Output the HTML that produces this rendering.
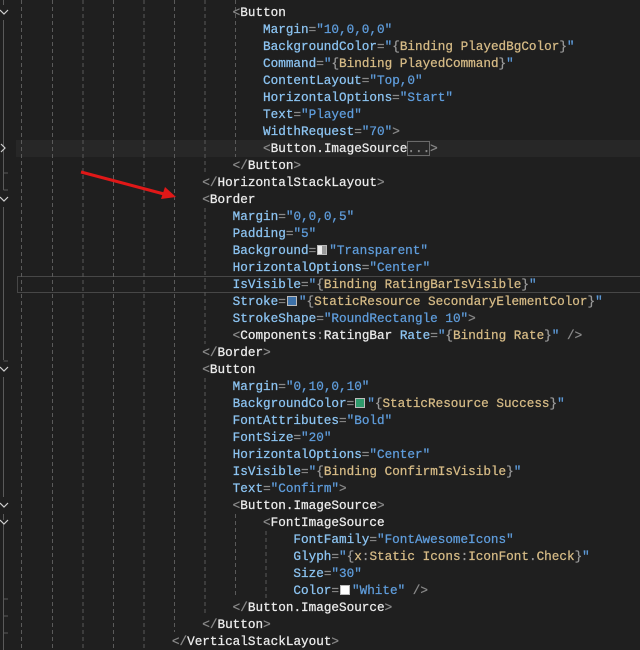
<!DOCTYPE html>
<html><head><meta charset="utf-8"><style>
html,body{margin:0;padding:0;background:#1f1f1f;width:640px;height:650px;overflow:hidden}
#ed{position:absolute;left:20px;top:4px;font-family:"Liberation Mono",monospace;font-size:12.67px;line-height:17px;color:#e6e6e6;-webkit-text-stroke:0.25px currentColor}
.l{height:17px;white-space:pre}
.p{color:#8a8a8a}.t{color:#ececec}.a{color:#8cc4f2}.s{color:#5f9ddc}.b{color:#d6bb86}.g{color:#9a9a9a}
.sw{display:inline-block;width:10px;height:10px;vertical-align:-1px;margin:0 2px 0 1px;box-sizing:border-box;border:1px solid #bbb;-webkit-text-stroke:0}
.hl{position:absolute;left:16px;width:624px;height:17px}
</style></head><body>
<div class="hl" style="top:140px;background:#272727"></div>
<div class="hl" style="top:276px;height:15px;border:1px solid #474747;border-right:none;left:17px"></div>
<svg width="640" height="650" style="position:absolute;left:0;top:0" xmlns="http://www.w3.org/2000/svg">
<g stroke="#5a5a5a" stroke-width="1" stroke-dasharray="4,3">
<line x1="21.5" y1="0" x2="21.5" y2="650"/><line x1="52.5" y1="0" x2="52.5" y2="650"/>
<line x1="83" y1="0" x2="83" y2="650"/><line x1="113.5" y1="0" x2="113.5" y2="650"/>
<line x1="144" y1="0" x2="144" y2="650"/><line x1="174.5" y1="0" x2="174.5" y2="632"/>
<line x1="205" y1="0" x2="205" y2="174"/><line x1="205" y1="208" x2="205" y2="344"/><line x1="205" y1="378" x2="205" y2="616"/>
<line x1="235.5" y1="0" x2="235.5" y2="157"/><line x1="235.5" y1="514" x2="235.5" y2="598"/>
<line x1="266" y1="531" x2="266" y2="598"/>
</g>
<g stroke="#5a5a5a" stroke-width="1" fill="none">
<line x1="3.5" y1="0" x2="3.5" y2="5"/><line x1="3.5" y1="20" x2="3.5" y2="190"/><line x1="3.5" y1="173" x2="8" y2="173"/><line x1="3.5" y1="190" x2="8" y2="190"/>
<line x1="3.5" y1="207" x2="3.5" y2="360"/><line x1="3.5" y1="361" x2="8" y2="361"/>
<line x1="3.5" y1="377" x2="3.5" y2="497"/><line x1="3.5" y1="514" x2="3.5" y2="650"/>
<line x1="3.5" y1="599" x2="8" y2="599"/><line x1="3.5" y1="616" x2="8" y2="616"/><line x1="3.5" y1="633" x2="8" y2="633"/>
</g>
<g stroke="#d0d0d0" stroke-width="1.2" fill="#1f1f1f">
<path d="M0 10 L4 14 L8 10" /><path d="M0 197 L4 201 L8 197"/><path d="M0 367 L4 371 L8 367"/>
<path d="M0 503 L4 507 L8 503"/><path d="M0 520 L4 524 L8 520"/><path d="M1 144 L5 148 L1 152"/>
</g>
<line x1="81" y1="172" x2="164" y2="194" stroke="#e01818" stroke-width="3"/>
<path d="M176 197 L161 199 L165 187 Z" fill="#e01818"/>
</svg>
<div id="ed"><div class="l">                            <span class="p">&lt;</span><span class="t">Button</span></div><div class="l">                                <span class="a">Margin</span><span class="p">=</span><span class="s">"10,0,0,0"</span></div><div class="l">                                <span class="a">BackgroundColor</span><span class="p">=</span><span class="s">"</span><span class="g">{</span><span class="b">Binding PlayedBgColor</span><span class="g">}</span><span class="s">"</span></div><div class="l">                                <span class="a">Command</span><span class="p">=</span><span class="s">"</span><span class="g">{</span><span class="b">Binding PlayedCommand</span><span class="g">}</span><span class="s">"</span></div><div class="l">                                <span class="a">ContentLayout</span><span class="p">=</span><span class="s">"Top,0"</span></div><div class="l">                                <span class="a">HorizontalOptions</span><span class="p">=</span><span class="s">"Start"</span></div><div class="l">                                <span class="a">Text</span><span class="p">=</span><span class="s">"Played"</span></div><div class="l">                                <span class="a">WidthRequest</span><span class="p">=</span><span class="s">"70"</span><span class="p">&gt;</span></div><div class="l">                                <span class="p">&lt;</span><span class="t">Button.ImageSource</span><span class="p" style="outline:1px solid #6a6a6a;outline-offset:-1px">...</span><span class="p">&gt;</span></div><div class="l">                            <span class="p">&lt;/</span><span class="t">Button</span><span class="p">&gt;</span></div><div class="l">                        <span class="p">&lt;/</span><span class="t">HorizontalStackLayout</span><span class="p">&gt;</span></div><div class="l">                        <span class="p">&lt;</span><span class="t">Border</span></div><div class="l">                            <span class="a">Margin</span><span class="p">=</span><span class="s">"0,0,0,5"</span></div><div class="l">                            <span class="a">Padding</span><span class="p">=</span><span class="s">"5"</span></div><div class="l">                            <span class="a">Background</span><span class="p">=</span><span class="sw" style="background:linear-gradient(90deg,#eee 50%,#999 50%)"></span><span class="s">"Transparent"</span></div><div class="l">                            <span class="a">HorizontalOptions</span><span class="p">=</span><span class="s">"Center"</span></div><div class="l">                            <span class="a">IsVisible</span><span class="p">=</span><span class="s">"</span><span class="g">{</span><span class="b">Binding RatingBarIsVisible</span><span class="g">}</span><span class="s">"</span></div><div class="l">                            <span class="a">Stroke</span><span class="p">=</span><span class="sw" style="background:#3d71a8"></span><span class="s">"</span><span class="g">{</span><span class="b">StaticResource SecondaryElementColor</span><span class="g">}</span><span class="s">"</span></div><div class="l">                            <span class="a">StrokeShape</span><span class="p">=</span><span class="s">"RoundRectangle 10"</span><span class="p">&gt;</span></div><div class="l">                            <span class="p">&lt;</span><span class="t">Components</span><span class="p">:</span><span class="t">RatingBar</span> <span class="a">Rate</span><span class="p">=</span><span class="s">"</span><span class="g">{</span><span class="b">Binding Rate</span><span class="g">}</span><span class="s">"</span> <span class="p">/&gt;</span></div><div class="l">                        <span class="p">&lt;/</span><span class="t">Border</span><span class="p">&gt;</span></div><div class="l">                        <span class="p">&lt;</span><span class="t">Button</span></div><div class="l">                            <span class="a">Margin</span><span class="p">=</span><span class="s">"0,10,0,10"</span></div><div class="l">                            <span class="a">BackgroundColor</span><span class="p">=</span><span class="sw" style="background:#2f9a6c"></span><span class="s">"</span><span class="g">{</span><span class="b">StaticResource Success</span><span class="g">}</span><span class="s">"</span></div><div class="l">                            <span class="a">FontAttributes</span><span class="p">=</span><span class="s">"Bold"</span></div><div class="l">                            <span class="a">FontSize</span><span class="p">=</span><span class="s">"20"</span></div><div class="l">                            <span class="a">HorizontalOptions</span><span class="p">=</span><span class="s">"Center"</span></div><div class="l">                            <span class="a">IsVisible</span><span class="p">=</span><span class="s">"</span><span class="g">{</span><span class="b">Binding ConfirmIsVisible</span><span class="g">}</span><span class="s">"</span></div><div class="l">                            <span class="a">Text</span><span class="p">=</span><span class="s">"Confirm"</span><span class="p">&gt;</span></div><div class="l">                            <span class="p">&lt;</span><span class="t">Button.ImageSource</span><span class="p">&gt;</span></div><div class="l">                                <span class="p">&lt;</span><span class="t">FontImageSource</span></div><div class="l">                                    <span class="a">FontFamily</span><span class="p">=</span><span class="s">"FontAwesomeIcons"</span></div><div class="l">                                    <span class="a">Glyph</span><span class="p">=</span><span class="s">"</span><span class="g">{</span><span class="b">x</span><span class="g">:</span><span class="b">Static Icons</span><span class="g">:</span><span class="b">IconFont</span><span class="g">.</span><span class="b">Check</span><span class="g">}</span><span class="s">"</span></div><div class="l">                                    <span class="a">Size</span><span class="p">=</span><span class="s">"30"</span></div><div class="l">                                    <span class="a">Color</span><span class="p">=</span><span class="sw" style="background:#fff"></span><span class="s">"White"</span> <span class="p">/&gt;</span></div><div class="l">                            <span class="p">&lt;/</span><span class="t">Button.ImageSource</span><span class="p">&gt;</span></div><div class="l">                        <span class="p">&lt;/</span><span class="t">Button</span><span class="p">&gt;</span></div><div class="l">                    <span class="p">&lt;/</span><span class="t">VerticalStackLayout</span><span class="p">&gt;</span></div></div>
</body></html>
